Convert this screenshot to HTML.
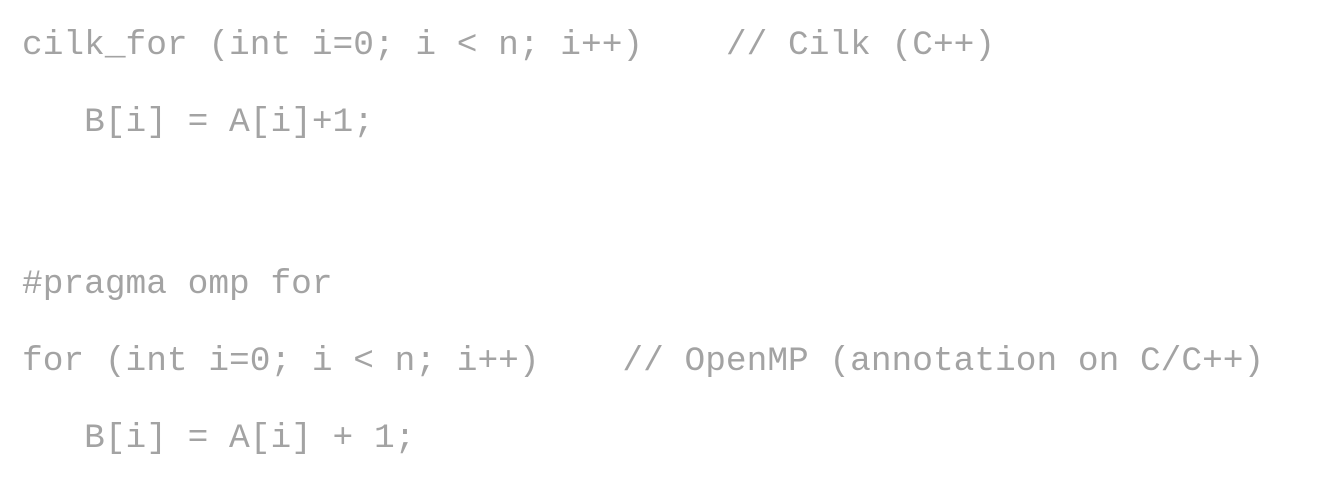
<!DOCTYPE html>
<html><head><meta charset="utf-8"><style>
html,body{margin:0;padding:0;background:#fff;width:1322px;height:500px;overflow:hidden}
.l{position:absolute;left:22px;font-family:"Liberation Mono",monospace;font-size:34.5px;line-height:40px;color:#a3a3a3;white-space:pre}
</style></head><body>
<div class="l" style="top:26px">cilk_for (int i=0; i &lt; n; i++)    // Cilk (C++)</div>
<div class="l" style="top:103px">   B[i] = A[i]+1;</div>
<div class="l" style="top:265px">#pragma omp for</div>
<div class="l" style="top:342px">for (int i=0; i &lt; n; i++)    // OpenMP (annotation on C/C++)</div>
<div class="l" style="top:419px">   B[i] = A[i] + 1;</div>
</body></html>
